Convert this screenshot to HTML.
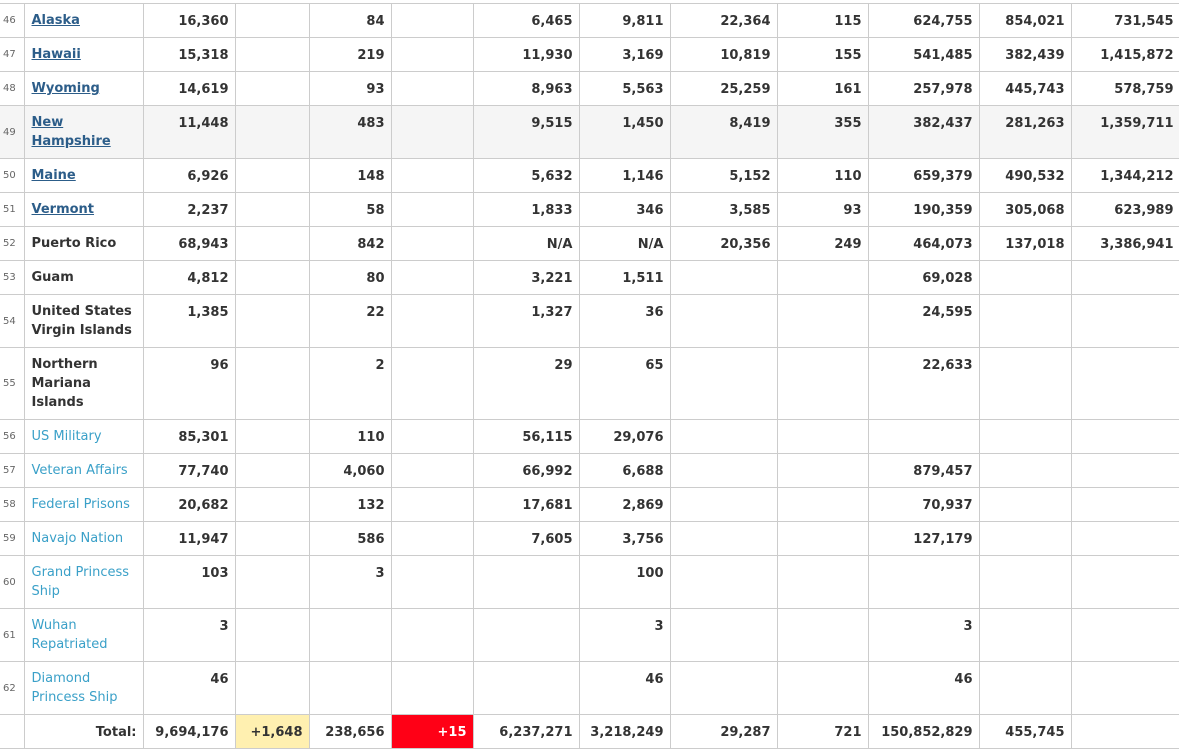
<!DOCTYPE html><html><head><style>
body{margin:0;background:#fff;width:1179px;height:752px;overflow:hidden;font-family:"DejaVu Sans",Verdana,sans-serif}
table{position:absolute;left:0;top:3px;border-collapse:collapse;table-layout:fixed;width:1180px}
td{border:1px solid #ccc;padding:8px 6px 0 6px;vertical-align:top;text-align:right;font-size:13px;font-weight:bold;color:#333;line-height:19px;box-sizing:border-box;overflow:hidden}
td.n{font-size:10px;font-weight:normal;color:#666;padding:0 0 0 3px;text-align:left;vertical-align:middle;border-left:none}
td.s{text-align:left;padding-left:7px;padding-top:7px}
a{color:#2c5d89;text-decoration:underline}
.b{color:#3aa0c8;font-weight:normal}
tr.g td{background:#f5f5f5}
.t td{padding-top:8px}
</style></head><body>
<table>
<colgroup><col style="width:24px"><col style="width:119px"><col style="width:92px"><col style="width:74px"><col style="width:82px"><col style="width:82px"><col style="width:106px"><col style="width:91px"><col style="width:107px"><col style="width:91px"><col style="width:111px"><col style="width:92px"><col style="width:109px"></colgroup>
<tr style="height:34px"><td class="n">46</td><td class="s"><a>Alaska</a></td><td>16,360</td><td></td><td>84</td><td></td><td>6,465</td><td>9,811</td><td>22,364</td><td>115</td><td>624,755</td><td>854,021</td><td>731,545</td></tr>
<tr style="height:34px"><td class="n">47</td><td class="s"><a>Hawaii</a></td><td>15,318</td><td></td><td>219</td><td></td><td>11,930</td><td>3,169</td><td>10,819</td><td>155</td><td>541,485</td><td>382,439</td><td>1,415,872</td></tr>
<tr style="height:34px"><td class="n">48</td><td class="s"><a>Wyoming</a></td><td>14,619</td><td></td><td>93</td><td></td><td>8,963</td><td>5,563</td><td>25,259</td><td>161</td><td>257,978</td><td>445,743</td><td>578,759</td></tr>
<tr class="g" style="height:53px"><td class="n">49</td><td class="s"><a>New Hampshire</a></td><td>11,448</td><td></td><td>483</td><td></td><td>9,515</td><td>1,450</td><td>8,419</td><td>355</td><td>382,437</td><td>281,263</td><td>1,359,711</td></tr>
<tr style="height:34px"><td class="n">50</td><td class="s"><a>Maine</a></td><td>6,926</td><td></td><td>148</td><td></td><td>5,632</td><td>1,146</td><td>5,152</td><td>110</td><td>659,379</td><td>490,532</td><td>1,344,212</td></tr>
<tr style="height:34px"><td class="n">51</td><td class="s"><a>Vermont</a></td><td>2,237</td><td></td><td>58</td><td></td><td>1,833</td><td>346</td><td>3,585</td><td>93</td><td>190,359</td><td>305,068</td><td>623,989</td></tr>
<tr style="height:34px"><td class="n">52</td><td class="s">Puerto Rico</td><td>68,943</td><td></td><td>842</td><td></td><td>N/A</td><td>N/A</td><td>20,356</td><td>249</td><td>464,073</td><td>137,018</td><td>3,386,941</td></tr>
<tr style="height:34px"><td class="n">53</td><td class="s">Guam</td><td>4,812</td><td></td><td>80</td><td></td><td>3,221</td><td>1,511</td><td></td><td></td><td>69,028</td><td></td><td></td></tr>
<tr style="height:53px"><td class="n">54</td><td class="s">United States Virgin Islands</td><td>1,385</td><td></td><td>22</td><td></td><td>1,327</td><td>36</td><td></td><td></td><td>24,595</td><td></td><td></td></tr>
<tr style="height:72px"><td class="n">55</td><td class="s">Northern Mariana Islands</td><td>96</td><td></td><td>2</td><td></td><td>29</td><td>65</td><td></td><td></td><td>22,633</td><td></td><td></td></tr>
<tr style="height:34px"><td class="n">56</td><td class="s b">US Military</td><td>85,301</td><td></td><td>110</td><td></td><td>56,115</td><td>29,076</td><td></td><td></td><td></td><td></td><td></td></tr>
<tr style="height:34px"><td class="n">57</td><td class="s b">Veteran Affairs</td><td>77,740</td><td></td><td>4,060</td><td></td><td>66,992</td><td>6,688</td><td></td><td></td><td>879,457</td><td></td><td></td></tr>
<tr style="height:34px"><td class="n">58</td><td class="s b">Federal Prisons</td><td>20,682</td><td></td><td>132</td><td></td><td>17,681</td><td>2,869</td><td></td><td></td><td>70,937</td><td></td><td></td></tr>
<tr style="height:34px"><td class="n">59</td><td class="s b">Navajo Nation</td><td>11,947</td><td></td><td>586</td><td></td><td>7,605</td><td>3,756</td><td></td><td></td><td>127,179</td><td></td><td></td></tr>
<tr style="height:53px"><td class="n">60</td><td class="s b">Grand Princess Ship</td><td>103</td><td></td><td>3</td><td></td><td></td><td>100</td><td></td><td></td><td></td><td></td><td></td></tr>
<tr style="height:53px"><td class="n">61</td><td class="s b">Wuhan Repatriated</td><td>3</td><td></td><td></td><td></td><td></td><td>3</td><td></td><td></td><td>3</td><td></td><td></td></tr>
<tr style="height:53px"><td class="n">62</td><td class="s b">Diamond Princess Ship</td><td>46</td><td></td><td></td><td></td><td></td><td>46</td><td></td><td></td><td>46</td><td></td><td></td></tr>
<tr class="t" style="height:34px"><td class="n"></td><td>Total:</td><td>9,694,176</td><td style="background:#fff0b0">+1,648</td><td>238,656</td><td style="background:#ff0016;color:#fff">+15</td><td>6,237,271</td><td>3,218,249</td><td>29,287</td><td>721</td><td>150,852,829</td><td>455,745</td><td></td></tr>
</table>
</body></html>
